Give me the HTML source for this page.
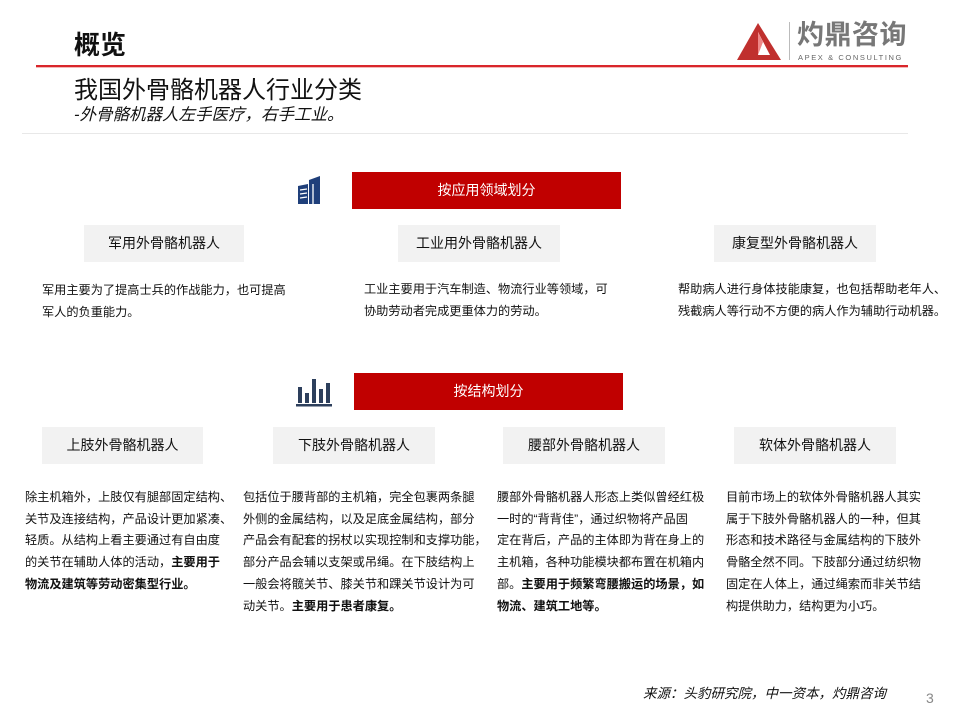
<!DOCTYPE html>
<html><head><meta charset="utf-8"><style>
body{margin:0;width:959px;height:719px;background:#fff;position:relative;overflow:hidden;font-family:"Liberation Sans","Noto Sans CJK SC",sans-serif;color:#111}
.a{position:absolute}
.red{background:#c00000;color:#fff;font-size:14px;text-align:center}
.gray{background:#f2f2f2;font-size:14px;text-align:center;color:#111}
.p{font-size:12.2px;line-height:21.7px;white-space:nowrap}
b{font-weight:bold}
</style></head><body>
<div class="a" style="left:74px;top:28px;font-size:26px;font-weight:bold;line-height:34px">概览</div>
<div class="a" style="left:36px;top:65px;width:872px;height:2px;background:#d9262b"></div>
<div class="a" style="left:36px;top:67px;width:872px;height:1px;background:#f4b8b8"></div>
<svg class="a" style="left:736px;top:22px" width="46" height="40" viewBox="0 0 46 40"><polygon points="22,1 1,38 45,38" fill="#c0302e"/><polygon points="22,10 22,33 34,33" fill="#fff"/><polygon points="22,10 27,20 22,33" fill="#e88"/></svg>
<div class="a" style="left:789px;top:22px;width:1px;height:38px;background:#bbb"></div>
<div class="a" style="left:797px;top:18px;font-size:27px;font-weight:bold;color:#777;letter-spacing:0.5px;line-height:34px">灼鼎咨询</div>
<div class="a" style="left:798px;top:53px;font-size:7.5px;color:#666;letter-spacing:1.6px">APEX &amp; CONSULTING</div>
<div class="a" style="left:74px;top:76px;font-size:24px;line-height:30px">我国外骨骼机器人行业分类</div>
<div class="a" style="left:74px;top:105px;font-size:16.5px;font-style:italic;line-height:20px">-外骨骼机器人左手医疗，右手工业。</div>
<div class="a" style="left:22px;top:133px;width:886px;height:1px;background:#e8e8e8"></div>

<svg class="a" style="left:296px;top:176px" width="26" height="30" viewBox="0 0 26 30"><g fill="#1f3f7a"><polygon points="13,4 24,0 24,28 13,28"/><polygon points="2,10 12,8 12,28 2,28"/></g><g stroke="#fff" stroke-width="1.3"><line x1="4" y1="14" x2="11" y2="13"/><line x1="4" y1="18" x2="11" y2="17"/><line x1="4" y1="22" x2="11" y2="21"/><line x1="17" y1="8" x2="17" y2="28"/></g></svg>
<div class="a red" style="left:352px;top:172px;width:269px;height:37px;line-height:37px">按应用领域划分</div>
<div class="a gray" style="left:84px;top:225px;width:160px;height:37px;line-height:37px">军用外骨骼机器人</div>
<div class="a gray" style="left:398px;top:225px;width:162px;height:37px;line-height:37px">工业用外骨骼机器人</div>
<div class="a gray" style="left:714px;top:225px;width:162px;height:37px;line-height:37px">康复型外骨骼机器人</div>
<div class="a p" style="left:42px;top:280px">军用主要为了提高士兵的作战能力，也可提高<br>军人的负重能力。</div>
<div class="a p" style="left:364px;top:279px">工业主要用于汽车制造、物流行业等领域，可<br>协助劳动者完成更重体力的劳动。</div>
<div class="a p" style="left:678px;top:279px">帮助病人进行身体技能康复，也包括帮助老年人、<br>残截病人等行动不方便的病人作为辅助行动机器。</div>

<svg class="a" style="left:296px;top:375px" width="36" height="32" viewBox="0 0 36 32"><g fill="#2d3f5c"><rect x="2" y="12" width="4" height="16"/><rect x="9" y="18" width="4" height="10"/><rect x="16" y="4" width="4" height="24"/><rect x="23" y="14" width="4" height="14"/><rect x="30" y="8" width="4" height="20"/><rect x="0" y="29" width="36" height="2.5"/></g></svg>
<div class="a red" style="left:354px;top:373px;width:269px;height:37px;line-height:37px">按结构划分</div>
<div class="a gray" style="left:42px;top:427px;width:161px;height:37px;line-height:37px">上肢外骨骼机器人</div>
<div class="a gray" style="left:273px;top:427px;width:162px;height:37px;line-height:37px">下肢外骨骼机器人</div>
<div class="a gray" style="left:503px;top:427px;width:162px;height:37px;line-height:37px">腰部外骨骼机器人</div>
<div class="a gray" style="left:734px;top:427px;width:162px;height:37px;line-height:37px">软体外骨骼机器人</div>

<div class="a p" style="left:25px;top:487px">除主机箱外，上肢仅有腿部固定结构、<br>关节及连接结构，产品设计更加紧凑、<br>轻质。从结构上看主要通过有自由度<br>的关节在辅助人体的活动，<b>主要用于</b><br><b>物流及建筑等劳动密集型行业。</b></div>
<div class="a p" style="left:243px;top:487px">包括位于腰背部的主机箱，完全包裹两条腿<br>外侧的金属结构，以及足底金属结构，部分<br>产品会有配套的拐杖以实现控制和支撑功能，<br>部分产品会辅以支架或吊绳。在下肢结构上<br>一般会将髋关节、膝关节和踝关节设计为可<br>动关节。<b>主要用于患者康复。</b></div>
<div class="a p" style="left:497px;top:487px">腰部外骨骼机器人形态上类似曾经红极<br>一时的“背背佳”，通过织物将产品固<br>定在背后，产品的主体即为背在身上的<br>主机箱，各种功能模块都布置在机箱内<br>部。<b>主要用于频繁弯腰搬运的场景，如</b><br><b>物流、建筑工地等。</b></div>
<div class="a p" style="left:726px;top:487px">目前市场上的软体外骨骼机器人其实<br>属于下肢外骨骼机器人的一种，但其<br>形态和技术路径与金属结构的下肢外<br>骨骼全然不同。下肢部分通过纺织物<br>固定在人体上，通过绳索而非关节结<br>构提供助力，结构更为小巧。</div>

<div class="a" style="left:643px;top:684px;font-size:13.5px;font-style:italic;line-height:20px">来源：头豹研究院，中一资本，灼鼎咨询</div>
<div class="a" style="left:926px;top:690px;font-size:14px;color:#888">3</div>
</body></html>
